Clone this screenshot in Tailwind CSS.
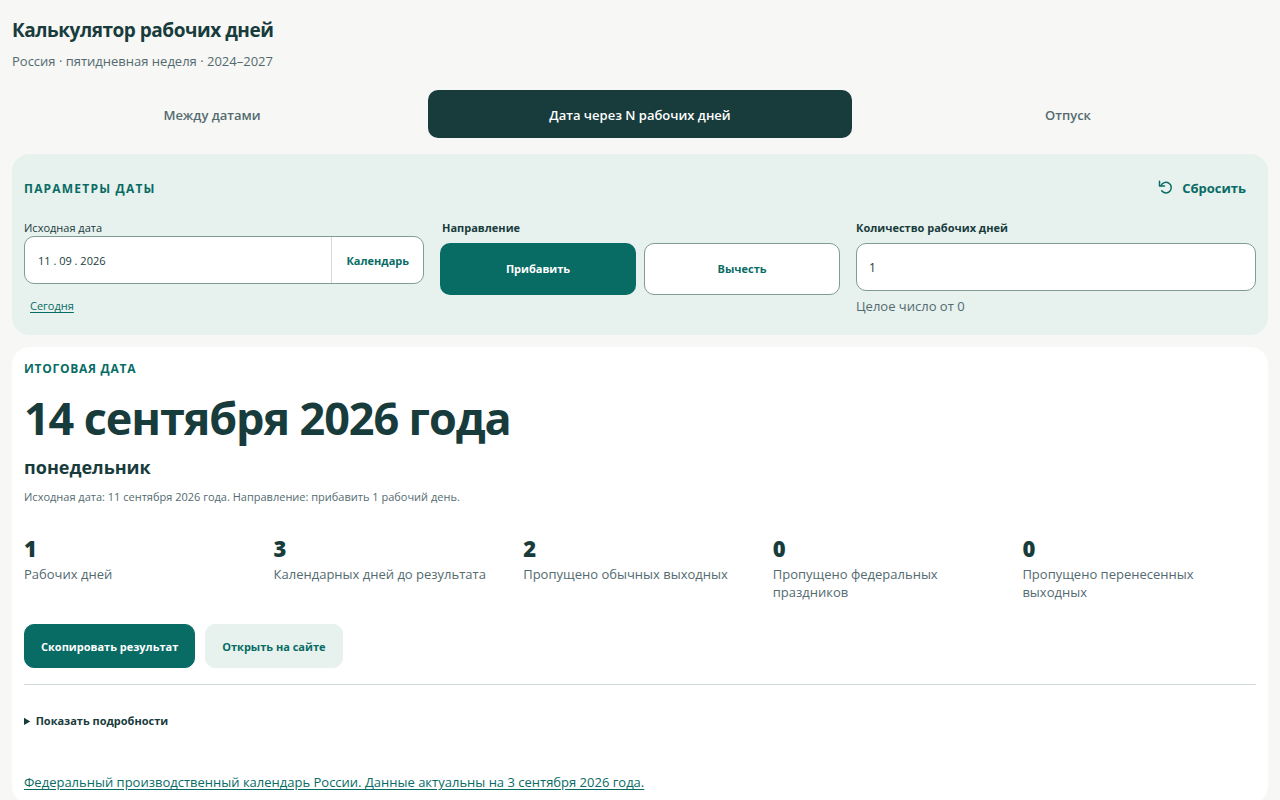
<!DOCTYPE html>
<html lang="ru">
<head>
    <meta charset="UTF-8">
    <meta name="viewport" content="width=device-width, initial-scale=1.0">
    <title>Калькулятор рабочих дней</title>
    <script src="https://cdn.jsdelivr.net/npm/@tailwindcss/browser@4"></script>
</head>
<body class="min-h-screen overflow-x-hidden bg-[#f7f7f5] font-['Open_Sans','Noto_Sans',sans-serif] text-[#183b3c]">

    <main class="p-3">
        <header class="pt-1">
            <h1 class="text-[19px] leading-7 font-bold tracking-tight">Калькулятор рабочих дней</h1>
            <p class="mt-[7px] text-[13px] leading-5 text-[#536b70]">Россия · пятидневная неделя · 2024–2027</p>
        </header>

        <!-- Tabs -->
        <nav class="-mx-3 mt-[19px] grid grid-cols-3 gap-1 text-[13px] font-semibold">
            <button type="button" class="h-12 rounded-[10px] pt-[3px] text-[#536b70]">Между датами</button>
            <button type="button" class="h-12 rounded-[10px] bg-[#183b3c] pt-[3px] text-white">Дата через N рабочих дней</button>
            <button type="button" class="h-12 rounded-[10px] pt-[3px] text-[#536b70]">Отпуск</button>
        </nav>

        <!-- Parameters -->
        <section class="mt-4 rounded-[18px] bg-[#e7f1ed] p-3">
            <div class="flex h-11 items-center justify-between">
                <h2 class="pt-0.5 text-[12px] font-bold tracking-widest text-[#086c65] uppercase">Параметры даты</h2>
                <button type="button" class="flex h-11 items-center gap-2 px-[10px] pt-0.5 text-[13px] font-bold text-[#086c65]">
                    <svg class="mb-0.5 size-4" viewBox="0 0 16 16" fill="none" stroke="currentColor" stroke-width="1.5" stroke-linecap="round" stroke-linejoin="round">
                        <path d="M1.5 1.2v4.8h5" />
                        <path d="M3 5.8A5.3 5.3 0 1 1 3.7 10.8" />
                    </svg>
                    Сбросить
                </button>
            </div>

            <div class="mt-[10px] grid grid-cols-3 gap-4">
                <div>
                    <label for="start" class="block text-[11px] leading-4">Исходная дата</label>
                    <div class="flex h-12 overflow-hidden rounded-[10px] border border-[#809c93] bg-white">
                        <input id="start" type="text" value="11 . 09 . 2026" class="min-w-0 flex-1 px-[13px] pt-0.5 text-[11px] outline-none">
                        <button type="button" class="border-l border-[#d0dcda] px-[14px] pt-0.5 text-[11px] font-bold text-[#086c65]">Календарь</button>
                    </div>
                    <button type="button" class="mt-[5px] block h-[34px] px-1.5 text-[11px] text-[#086c65] underline underline-offset-2">Сегодня</button>
                </div>

                <fieldset>
                    <legend class="px-0.5 text-[11px] leading-4 font-bold">Направление</legend>
                    <div class="mt-[7px] grid grid-cols-2 gap-2 text-[11px] font-bold">
                        <button type="button" class="h-[52px] rounded-[10px] bg-[#086c65] text-white">Прибавить</button>
                        <button type="button" class="h-[52px] rounded-[10px] border border-[#809c93] bg-white text-[#086c65]">Вычесть</button>
                    </div>
                </fieldset>

                <div>
                    <label for="days" class="block text-[11px] leading-4 font-bold">Количество рабочих дней</label>
                    <input id="days" type="text" inputmode="numeric" value="1" class="mt-[7px] block h-12 w-full rounded-[10px] border border-[#809c93] bg-white px-3 text-[12px]">
                    <p class="mt-1.5 text-[13px] leading-[18px] text-[#536b70]">Целое число от 0</p>
                </div>
            </div>
        </section>

        <!-- Result -->
        <section class="mt-3 rounded-[18px] bg-white p-3">
            <h2 class="pt-px text-[12px] leading-[18px] font-bold tracking-[0.06em] text-[#086c65] uppercase">Итоговая дата</h2>
            <p class="mt-[14px] text-[45px] leading-[52px] font-bold tracking-tight">14 сентября 2026 года</p>
            <p class="mt-[9px] text-[18px] leading-7 font-bold">понедельник</p>
            <p class="mt-[7px] text-[11px] leading-[18px] text-[#536b70]">Исходная дата: 11 сентября 2026 года. Направление: прибавить 1 рабочий день.</p>

            <dl class="mt-[30px] grid grid-cols-5 gap-4 text-[13px] leading-[18px] text-[#536b70]">
                <div class="flex flex-col-reverse justify-end gap-[5px]">
                    <dt>Рабочих дней</dt>
                    <dd class="text-[22px] leading-6 font-extrabold text-[#183b3c]">1</dd>
                </div>
                <div class="flex flex-col-reverse justify-end gap-[5px]">
                    <dt>Календарных дней до результата</dt>
                    <dd class="text-[22px] leading-6 font-extrabold text-[#183b3c]">3</dd>
                </div>
                <div class="flex flex-col-reverse justify-end gap-[5px]">
                    <dt>Пропущено обычных выходных</dt>
                    <dd class="text-[22px] leading-6 font-extrabold text-[#183b3c]">2</dd>
                </div>
                <div class="flex flex-col-reverse justify-end gap-[5px]">
                    <dt>Пропущено федеральных праздников</dt>
                    <dd class="text-[22px] leading-6 font-extrabold text-[#183b3c]">0</dd>
                </div>
                <div class="flex flex-col-reverse justify-end gap-[5px]">
                    <dt>Пропущено перенесенных выходных</dt>
                    <dd class="text-[22px] leading-6 font-extrabold text-[#183b3c]">0</dd>
                </div>
            </dl>

            <div class="mt-[23px] flex gap-[10px] text-[11px] font-bold">
                <button type="button" class="h-11 rounded-[10px] border border-[#086c65] bg-[#086c65] px-4 pt-0.5 text-white">Скопировать результат</button>
                <a href="#" class="flex h-11 items-center rounded-[10px] border border-[#e7f1ed] bg-[#e7f1ed] px-4 pt-0.5 text-[#086c65]">Открыть на сайте</a>
            </div>

            <details class="mt-4 border-t border-[#d0dcda] pt-[14px]">
                <summary class="py-[14px] text-[11px] leading-4 font-bold">Показать подробности</summary>
            </details>

            <p class="mt-[29px] text-[13px] leading-5">
                <a href="#" class="text-[#086c65] underline underline-offset-2">Федеральный производственный календарь России. Данные актуальны на 3 сентября 2026 года.</a>
            </p>
        </section>
    </main>

</body>
</html>
